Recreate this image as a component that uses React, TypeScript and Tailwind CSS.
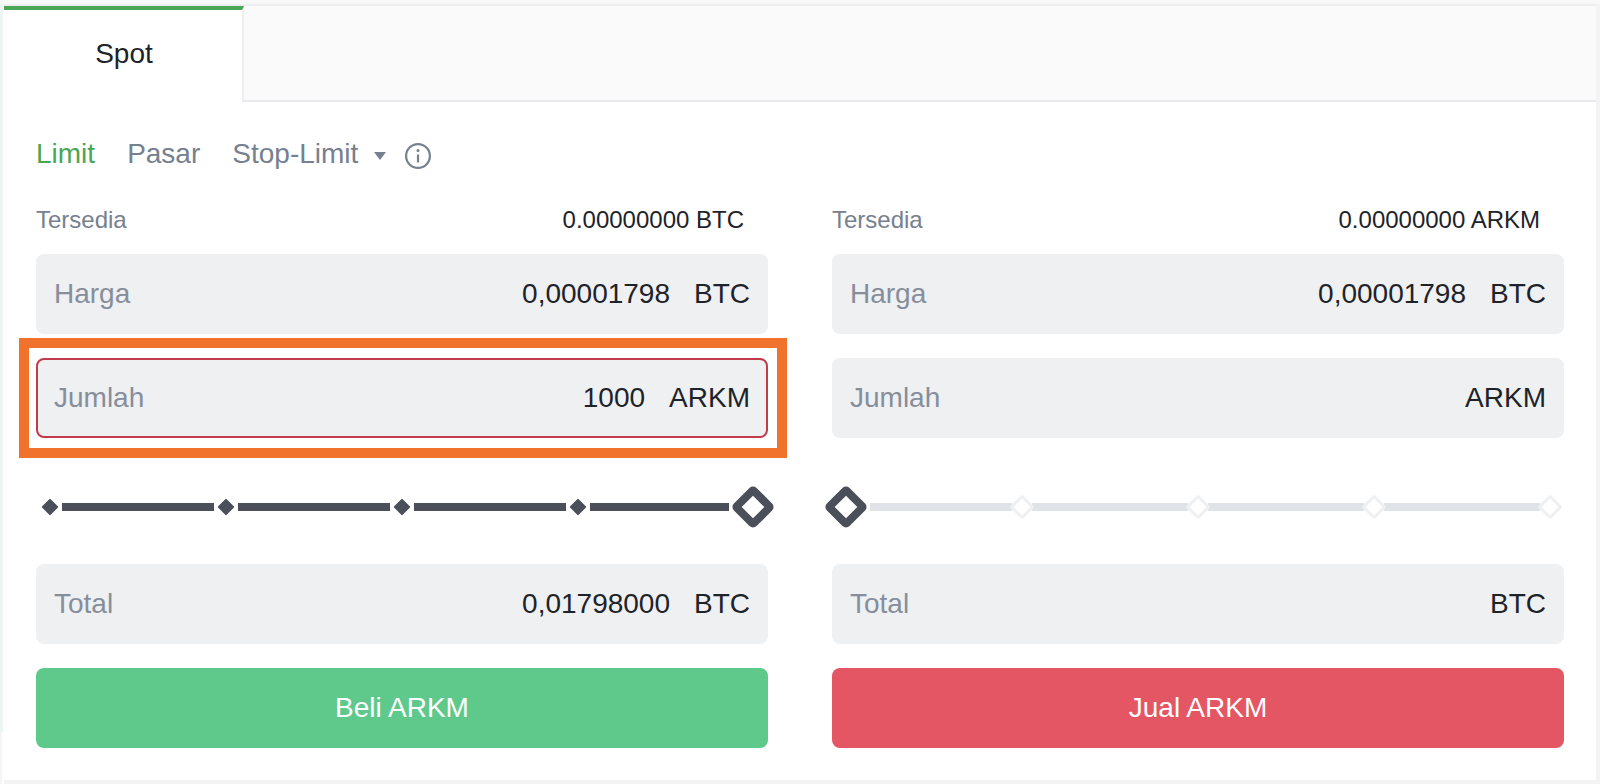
const font = { fontFamily: '"Liberation Sans", Arial, sans-serif' };

function Field({ label, value, unit, alert }: { label: string; value?: string; unit: string; alert?: boolean }) {
  return (
    <div
      className={`flex h-20 items-center justify-between rounded-lg bg-[#eff0f2] text-[28px] ${
        alert ? 'border-2 border-[#c23b4b] px-4' : 'px-[18px]'
      }`}
    >
      <span className="text-[#868e9c]">{label}</span>
      <div className="flex gap-6 text-[#1e2329]">
        {value && <span>{value}</span>}
        <span>{unit}</span>
      </div>
    </div>
  );
}

function Mark({ active }: { active: boolean }) {
  if (active) {
    return (
      <div className="flex w-6 shrink-0 items-center justify-center">
        <div className="size-3 rotate-45 rounded-[1px] bg-[#4a4f5a]" />
      </div>
    );
  }
  // the light track runs right up to the diamond, so this one sits in a narrower slot
  return (
    <div className="flex w-5 shrink-0 items-center justify-center">
      <div className="size-[18px] shrink-0 rotate-45 rounded-[2px] border-[3px] border-[#eef0f2] bg-white" />
    </div>
  );
}

function Thumb() {
  return (
    <div className="flex w-12 shrink-0 items-center justify-center">
      <div className="size-8 rotate-45 rounded-[5px] border-8 border-[#4a4f5a] bg-white" />
    </div>
  );
}

function Bar({ width, active }: { width: string; active: boolean }) {
  return <div className={`h-2 ${width} ${active ? 'bg-[#4a4f5a]' : 'bg-[#dfe2e7]'}`} />;
}

function Column({
  coin,
  unit,
  balanceUnit,
  price,
  amount,
  total,
  slider,
  alert,
  action,
  actionColor,
}: {
  coin: string;
  unit: string;
  balanceUnit: string;
  price: string;
  amount?: string;
  total?: string;
  slider: React.ReactNode;
  alert?: boolean;
  action: string;
  actionColor: string;
}) {
  return (
    <div className="w-[732px]">
      <div className="flex h-[28px] items-center justify-between pr-6 text-2xl">
        <span className="text-[#76808f]">Tersedia</span>
        <span className="text-[#1e2329]">0.00000000 {balanceUnit}</span>
      </div>
      <div className="mt-5 flex flex-col gap-6">
        <Field label="Harga" value={price} unit={unit} />
        <Field label="Jumlah" value={amount} unit={coin} alert={alert} />
      </div>
      <div className="flex h-[126px] items-center pt-3">{slider}</div>
      <Field label="Total" value={total} unit={unit} />
      <button className={`mt-6 h-20 w-full rounded-lg text-[28px] text-white ${actionColor}`}>{action}</button>
    </div>
  );
}

export default function App() {
  return (
    <div style={font} className="relative flex h-[784px] w-[1600px] flex-col overflow-hidden bg-white">
      <div className="h-1 shrink-0 bg-[#f8f8f8]" />
      <div className="flex min-h-0 flex-1">
        <div className="flex w-1 shrink-0 flex-col">
          <div className="w-[3px] flex-1 bg-[#edf5f2]" />
          <div className="h-[52px] w-[2px] bg-[#f5f5f5]" />
        </div>
        <div className="min-w-0 flex-1 border-b-4 border-[#f3f3f3]">
          <div className="flex h-[98px] border-t-2 border-[#eeeef0] bg-[#fafafa]">
            <div className="flex w-[240px] items-center justify-center border-t-4 border-r-2 border-t-[#4aa652] border-r-[#eeeef0] bg-white pl-[2px] text-[28px] text-[#1e2329]">
              <span className="-mt-1">Spot</span>
            </div>
            <div className="flex-1 border-b-2 border-[#eaeaee]" />
          </div>

          <div className="flex h-[70px] items-center gap-8 px-8 pt-[34px] text-[28px]">
            <span className="text-[#4aa652]">Limit</span>
            <span className="text-[#76808f]">Pasar</span>
            <div className="flex items-center text-[#76808f]">
              <span>Stop-Limit</span>
              <svg className="mt-[4px] ml-4 h-2 w-3" viewBox="0 0 12 8" fill="#76808f">
                <path d="M0 0h12L6 8z" />
              </svg>
              <svg className="mt-1 ml-[19px] size-[26px]" viewBox="0 0 26 26" fill="none" stroke="#76808f" strokeWidth="2.2">
                <circle cx="13" cy="13" r="11.9" />
                <path d="M13 11.5v8" />
                <circle cx="13" cy="7.5" r="1.5" fill="#76808f" stroke="none" />
              </svg>
            </div>
          </div>

          <div className="mt-[34px] flex gap-16 px-8">
            <Column
              coin="ARKM"
              unit="BTC"
              balanceUnit="BTC"
              price="0,00001798"
              amount="1000"
              total="0,01798000"
              alert
              action="Beli ARKM"
              actionColor="bg-[#5ec98b]"
              slider={
                <div className="ml-[2px] flex items-center">
                  <Mark active />
                  <Bar width="w-[152px]" active />
                  <Mark active />
                  <Bar width="w-[152px]" active />
                  <Mark active />
                  <Bar width="w-[152px]" active />
                  <Mark active />
                  <Bar width="w-[139px]" active />
                  <Thumb />
                </div>
              }
            />
            <Column
              coin="ARKM"
              unit="BTC"
              balanceUnit="ARKM"
              price="0,00001798"
              action="Jual ARKM"
              actionColor="bg-[#e45663]"
              slider={
                <div className="-ml-[10px] flex items-center">
                  <Thumb />
                  <Bar width="w-[142px]" active={false} />
                  <Mark active={false} />
                  <Bar width="w-[156px]" active={false} />
                  <Mark active={false} />
                  <Bar width="w-[156px]" active={false} />
                  <Mark active={false} />
                  <Bar width="w-[156px]" active={false} />
                  <Mark active={false} />
                </div>
              }
            />
          </div>
        </div>
        <div className="w-1 shrink-0 bg-[#f3f3f3]" />
      </div>

      {/* annotation drawn over the Jumlah field */}
      <div className="absolute top-[338px] left-[19px] h-[120px] w-[768px] border-[10px] border-[#f0722c]" />
    </div>
  );
}
